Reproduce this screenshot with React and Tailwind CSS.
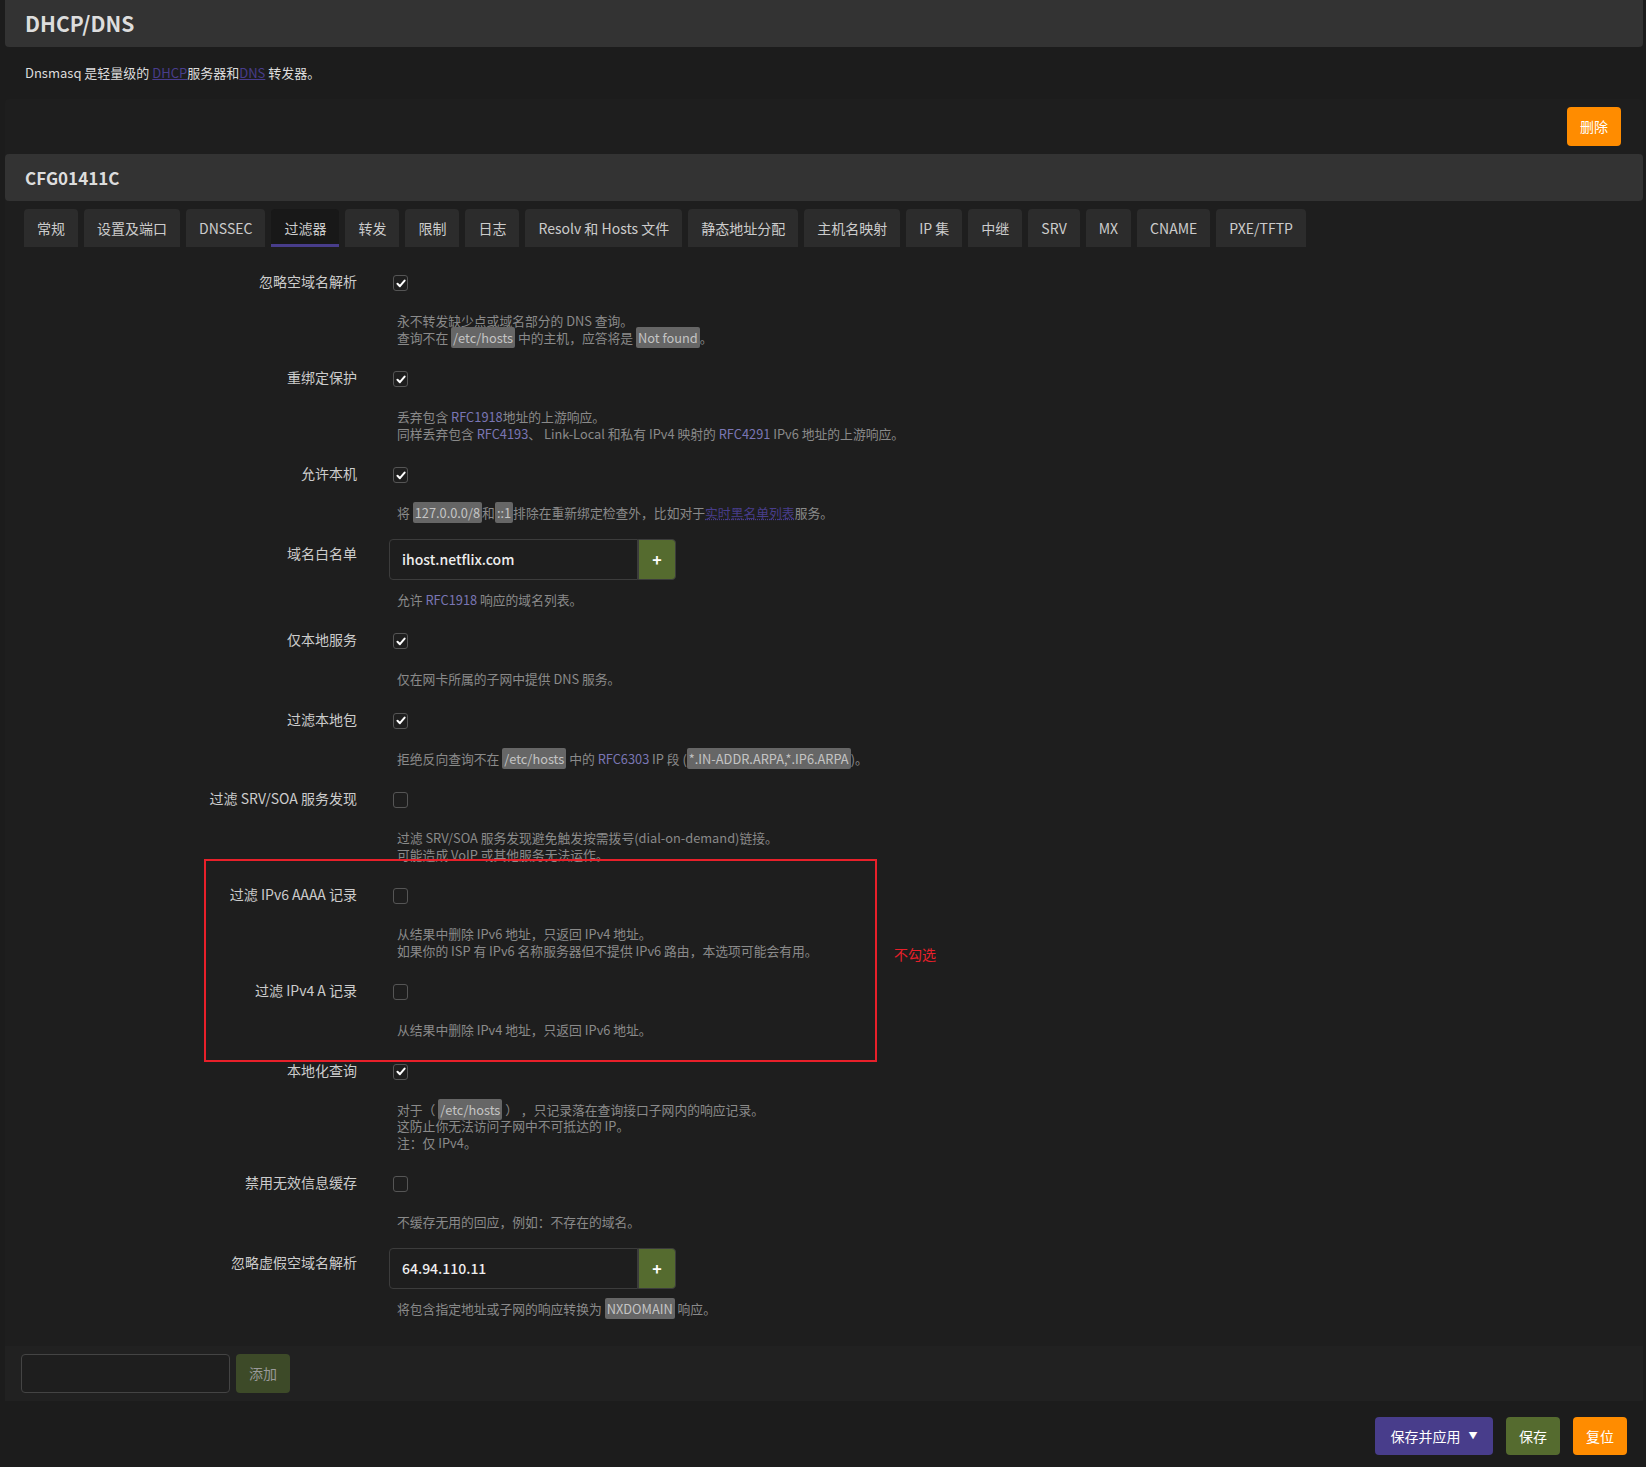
import React from "react";

const tabs = [
  "常规",
  "设置及端口",
  "DNSSEC",
  "过滤器",
  "转发",
  "限制",
  "日志",
  "Resolv 和 Hosts 文件",
  "静态地址分配",
  "主机名映射",
  "IP 集",
  "中继",
  "SRV",
  "MX",
  "CNAME",
  "PXE/TFTP",
];

function Code({ children }) {
  return (
    <code className="rounded-[2px] bg-[#666666] px-[2px] py-[1px] font-['Noto_Sans_CJK_SC',sans-serif] text-[#c4c4c4]">
      {children}
    </code>
  );
}

function Ref({ children }) {
  return <a className="text-[#7a76b4]">{children}</a>;
}

function Check({ checked }) {
  return (
    <span className="ml-[4px] flex h-[16px] w-[15px] items-center justify-center rounded-[3px] border border-[#555555] bg-[#1e1e1e]">
      {checked && (
        <svg width="10" height="9" viewBox="0 0 10 9" fill="none">
          <path d="M1.5 4.8 L3.9 7.2 L8.6 1.6" stroke="#ffffff" strokeWidth="2" strokeLinecap="round" strokeLinejoin="round" />
        </svg>
      )}
    </span>
  );
}

function Row({ label, checked, input, children }) {
  return (
    <div className="mb-[17px] flex">
      <div className="w-[352px] shrink-0 pt-[4px] text-right text-[14px] leading-[20px] text-[#cccccc]">
        {label}
      </div>
      <div className="ml-[32px] flex-1">
        {input ? (
          <div className="flex h-[41px] w-[287px]">
            <div className="flex h-full w-[249px] items-center rounded-l-[4px] border border-[#3c3c3c] bg-[#1e1e1e] pl-[12px] text-[14px] font-medium text-[#eeeeee]">
              {input}
            </div>
            <button className="flex h-full w-[38px] items-center justify-center rounded-r-[4px] border border-[#3c3c3c] bg-[#556b2f] text-[16px] font-bold text-white">
              +
            </button>
          </div>
        ) : (
          <div className="flex h-[32px] items-center">
            <Check checked={checked} />
          </div>
        )}
        <div
          className={
            (input ? "mt-[12px]" : "mt-[14px]") +
            " pl-[8px] text-[12.8px] leading-[16.5px] text-[#8a8a8a]"
          }
        >
          {children}
        </div>
      </div>
    </div>
  );
}

export default function App() {
  return (
    <div className="relative min-h-[1467px] bg-[#1c1c1c] font-['Noto_Sans_CJK_SC',sans-serif] text-[#cccccc]">
      <div className="ml-[5px] mr-[3px]">
        <div className="flex h-[47px] items-center rounded-b-[4px] bg-[#333333] px-[20px]">
          <h2 className="text-[21px] font-bold text-[#dddddd]">DHCP/DNS</h2>
        </div>
        <div className="flex h-[52px] items-center px-[20px] text-[13px] text-[#dddddd]">
          <span>
            Dnsmasq 是轻量级的 <a className="text-[#483d8b] underline">DHCP</a>服务器和
            <a className="text-[#483d8b] underline">DNS</a> 转发器。
          </span>
        </div>

        <div className="rounded-[4px] bg-[#1e1e1e]">
          <div className="flex h-[55px] items-center justify-end pr-[22px]">
            <button className="h-[39px] w-[54px] rounded-[4px] bg-[#ff8c00] text-[14px] text-white">
              删除
            </button>
          </div>

          <div className="flex h-[47px] items-center rounded-[4px] bg-[#333333] px-[20px]">
            <h3 className="text-[17px] font-bold text-[#dddddd]">CFG01411C</h3>
          </div>

          <div className="mt-[8px] flex gap-[6px] pl-[19px]">
            {tabs.map((t) => (
              <div
                key={t}
                className={
                  t === "过滤器"
                    ? "flex h-[38px] items-center rounded-t-[4px] border-b-[3px] border-[#483d8b] bg-[#181818] px-[13px] pt-[3px] text-[14px] text-[#cccccc]"
                    : "flex h-[38px] items-center rounded-t-[4px] bg-[#2c2c2c] px-[13px] text-[14px] text-[#cccccc]"
                }
              >
                {t}
              </div>
            ))}
          </div>

          <div className="pt-[20px]">
            <Row label="忽略空域名解析" checked>
              <div>永不转发缺少点或域名部分的 DNS 查询。</div>
              <div>
                查询不在 <Code>/etc/hosts</Code> 中的主机，应答将是 <Code>Not found</Code>。
              </div>
            </Row>
            <Row label="重绑定保护" checked>
              <div>
                丢弃包含 <Ref>RFC1918</Ref>地址的上游响应。
              </div>
              <div>
                同样丢弃包含 <Ref>RFC4193</Ref>、 Link-Local 和私有 IPv4 映射的 <Ref>RFC4291</Ref> IPv6 地址的上游响应。
              </div>
            </Row>
            <Row label="允许本机" checked>
              <div>
                将 <Code>127.0.0.0/8</Code>和<Code>::1</Code>排除在重新绑定检查外，比如对于
                <a className="text-[#483d8b] underline decoration-dotted">实时黑名单列表</a>服务。
              </div>
            </Row>
            <Row label="域名白名单" input="ihost.netflix.com">
              <div>
                允许 <Ref>RFC1918</Ref> 响应的域名列表。
              </div>
            </Row>
            <Row label="仅本地服务" checked>
              <div>仅在网卡所属的子网中提供 DNS 服务。</div>
            </Row>
            <Row label="过滤本地包" checked>
              <div>
                拒绝反向查询不在 <Code>/etc/hosts</Code> 中的 <Ref>RFC6303</Ref> IP 段 (
                <Code>*.IN-ADDR.ARPA,*.IP6.ARPA</Code>)。
              </div>
            </Row>
            <Row label="过滤 SRV/SOA 服务发现">
              <div>过滤 SRV/SOA 服务发现避免触发按需拨号(dial-on-demand)链接。</div>
              <div>可能造成 VoIP 或其他服务无法运作。</div>
            </Row>
            <Row label="过滤 IPv6 AAAA 记录">
              <div>从结果中删除 IPv6 地址，只返回 IPv4 地址。</div>
              <div>如果你的 ISP 有 IPv6 名称服务器但不提供 IPv6 路由，本选项可能会有用。</div>
            </Row>
            <Row label="过滤 IPv4 A 记录">
              <div>从结果中删除 IPv4 地址，只返回 IPv6 地址。</div>
            </Row>
            <Row label="本地化查询" checked>
              <div>
                对于（ <Code>/etc/hosts</Code> ） ，只记录落在查询接口子网内的响应记录。
              </div>
              <div>这防止你无法访问子网中不可抵达的 IP。</div>
              <div>注：仅 IPv4。</div>
            </Row>
            <Row label="禁用无效信息缓存">
              <div>不缓存无用的回应，例如：不存在的域名。</div>
            </Row>
            <Row label="忽略虚假空域名解析" input="64.94.110.11">
              <div>
                将包含指定地址或子网的响应转换为 <Code>NXDOMAIN</Code> 响应。
              </div>
            </Row>
          </div>

          <div className="mt-[29px] flex h-[55px] gap-[6px] bg-[#212121] pl-[16px] pt-[8px]">
            <div className="h-[39px] w-[209px] rounded-[4px] border border-[#444444] bg-[#1e1e1e]" />
            <button className="h-[39px] w-[54px] rounded-[4px] bg-[#3d4a28] text-[14px] text-[#999999]">
              添加
            </button>
          </div>
        </div>

        <div className="flex justify-end gap-[13px] pr-[16px] pt-[16px]">
          <button className="flex h-[38px] w-[118px] items-center justify-center gap-[8px] rounded-[4px] bg-[#483d8b] text-[14px] text-white">
            保存并应用
            <span className="text-[9px]">▼</span>
          </button>
          <button className="h-[38px] w-[54px] rounded-[4px] bg-[#556b2f] text-[14px] text-white">
            保存
          </button>
          <button className="h-[38px] w-[54px] rounded-[4px] bg-[#ff8c00] text-[14px] text-white">
            复位
          </button>
        </div>
      </div>

      <div className="pointer-events-none absolute left-[204px] top-[859px] h-[203px] w-[673px] border-2 border-[#e8202a]" />
      <div className="absolute left-[894px] top-[944px] text-[14px] text-[#e8202a]">不勾选</div>
    </div>
  );
}
